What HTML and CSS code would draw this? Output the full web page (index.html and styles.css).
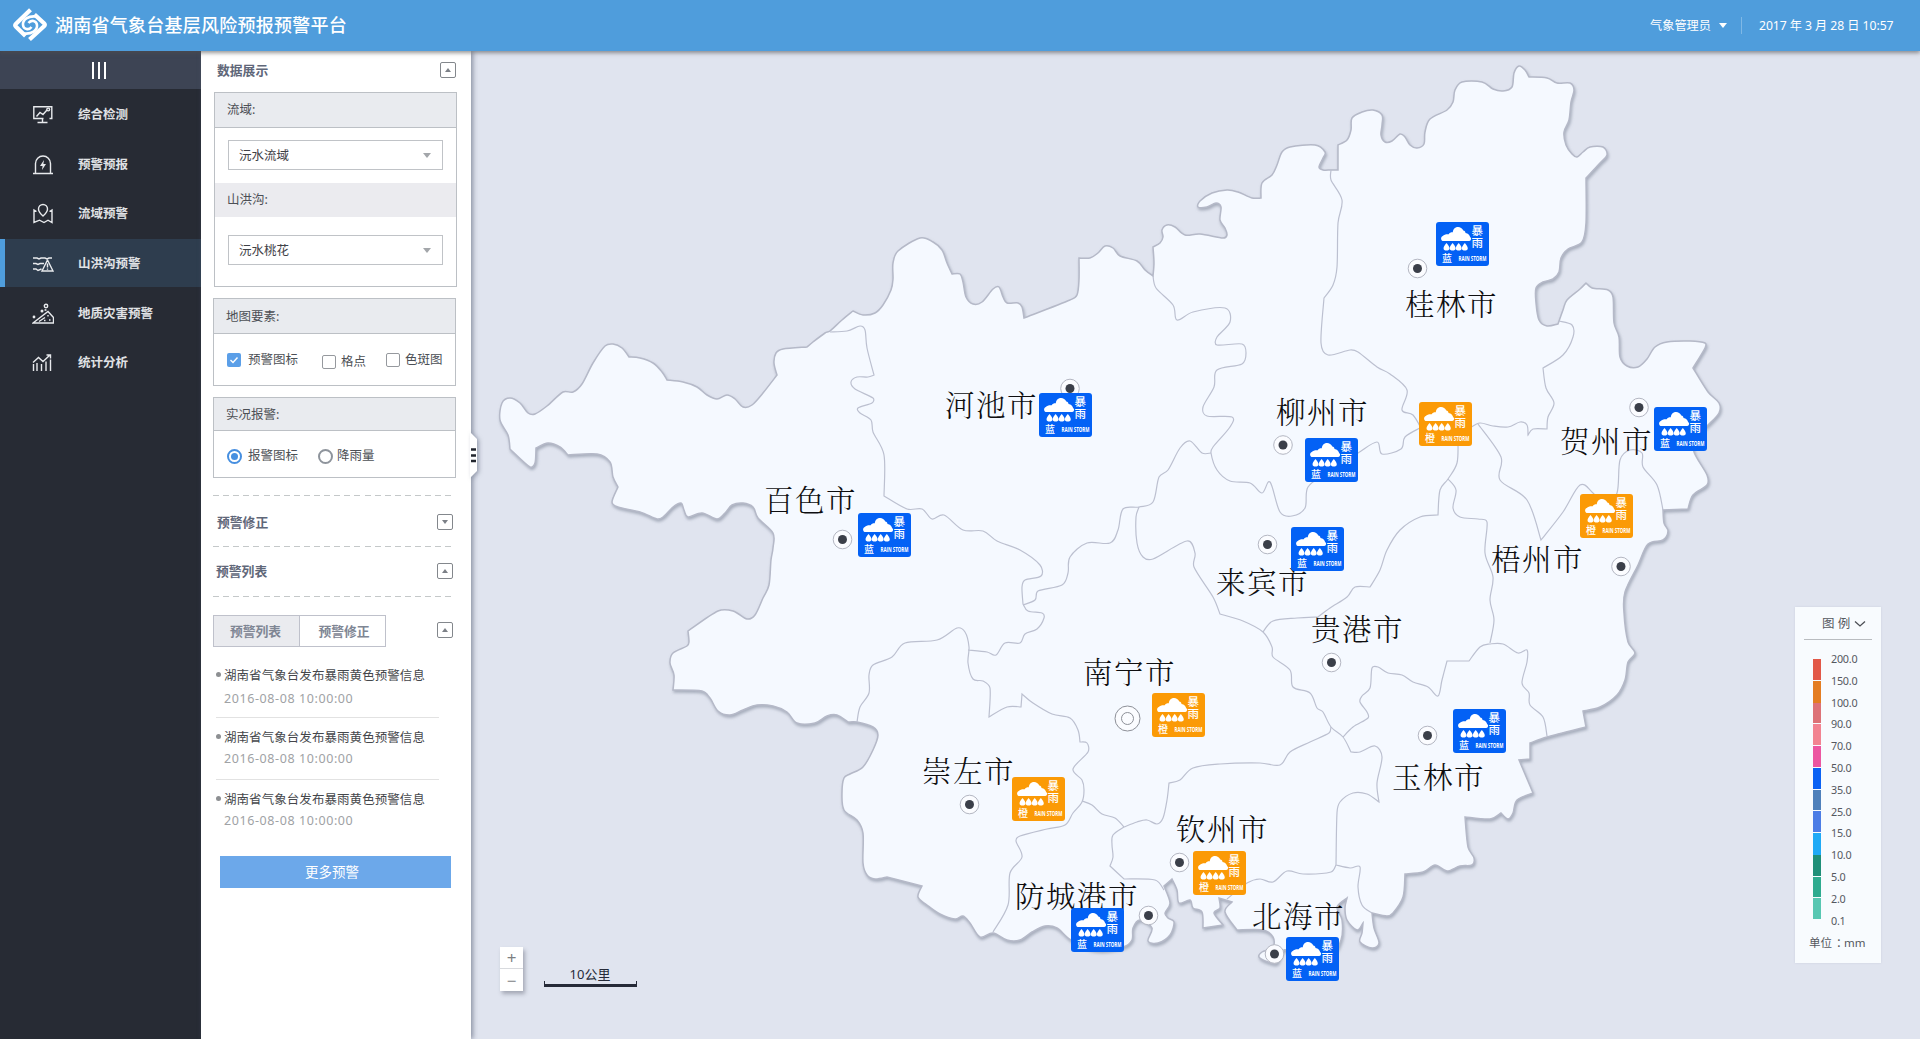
FILE: index.html
```html
<!DOCTYPE html>
<html lang="zh-CN">
<head>
<meta charset="utf-8">
<title>湖南省气象台基层风险预报预警平台</title>
<link rel="stylesheet" href="styles.css">
</head>
<body>
<header class="topbar">
  <svg class="logo" viewBox="0 0 36 34">
    <path class="arm" d="M18.500 1.800 4 15.700q-1.500 1.500 0 3L13.500 28M17.500 31.500 32 18.300q1.500-1.500 0-3L22.500 6.500"/>
    <path class="swirl" d="M24.500 8.500C16 7.500 10.500 11.500 11 17c.5 4.500 6 5.500 8.500 2M11.500 25.500C20 26.500 25.500 22.500 25 17c-.5-4.500-6-5.500-8.500-2"/>
  </svg>
  <h1 class="brand">湖南省气象台基层风险预报预警平台</h1>
  <div class="account">
    <span class="user">气象管理员</span><i class="caret"></i>
    <span class="clock">2017 年 3 月 28 日 10:57</span>
  </div>
</header>

<div class="layout">
  <nav class="sidebar">
    <div class="toggle"><i></i><i></i><i></i></div>
    <a class="item"><svg class="nav-icon" viewBox="0 0 22 22"><path d="M11.500 14.500H1.800V2.800h18v11.700h-2.300M10.500 14.500v4M5.500 18.500h10M4.500 12.500 8 8.500l3 2 4-4.500"/><circle cx="16.200" cy="5.500" r="1.400"/></svg><span>综合检测</span></a>
    <a class="item"><svg class="nav-icon" viewBox="0 0 22 22"><path d="M1 19.500h20M3.500 19.500V9.500a7.500 7.500 0 0 1 15 0v10"/><path class="solid" d="m12 6-4 6h2.600l-.6 4 4-6h-2.600Z"/></svg><span>预警预报</span></a>
    <a class="item"><svg class="nav-icon" viewBox="0 0 22 22"><path d="M4.500 8.500 2 7v12.500l5.500-2.300 4.500 2.300 4-2.300 4 2.300V7l-2.500 1.500M11 13Q6.500 9 6.500 6a4.500 4.500 0 0 1 9 0Q15.500 9 11 13Z"/></svg><span>流域预警</span></a>
    <a class="item active"><svg class="nav-icon" viewBox="0 0 22 22"><path d="M1 5h4l2 1 2-1h4l2 1 2-1h3M1 10.500h3l2 1 2-1h4M1 16h3l2 1.500L9.500 16M15.500 7l5.500 11H10ZM15.500 10.500v4M15.500 15.500v1.300"/></svg><span>山洪沟预警</span></a>
    <a class="item"><svg class="nav-icon" viewBox="0 0 22 22"><path d="M1 20 16 8.500l5.500 6V20ZM7 18.500l6-4M16 12v1.500M12 17.500h1.500M17 17h1.500"/><circle cx="14" cy="3" r="1.700"/><circle cx="10" cy="8" r=".8"/><circle cx="13.500" cy="7" r=".4"/><circle cx="2" cy="14" r=".7"/></svg><span>地质灾害预警</span></a>
    <a class="item"><svg class="nav-icon" viewBox="0 0 22 22"><path d="M1.500 19v-7M5 19v-8M9.500 19v-7M14 19V9.500M18.500 19V7.500M1 10.500l5.500-5 4.500 4 7-6.500M14.500 3H18.500v3.500"/></svg><span>统计分析</span></a>
  </nav>

  <aside class="panel">
    <div class="section first"><h2>数据展示</h2><button class="fold up"></button></div>
    <div class="card basin">
      <div class="card-head">流域:</div>
      <div class="select one">沅水流域</div>
      <div class="card-sub">山洪沟:</div>
      <div class="select two">沅水桃花</div>
    </div>
    <div class="card elements">
      <div class="card-head">地图要素:</div>
      <div class="options">
        <label class="opt"><i class="box on"><svg viewBox="0 0 14 14"><path d="m3.500 7 2.500 2.500 4.500-5"/></svg></i>预警图标</label>
        <label class="opt grid-opt"><i class="box"></i>格点</label>
        <label class="opt spot-opt"><i class="box"></i>色斑图</label>
      </div>
    </div>
    <div class="card alarms">
      <div class="card-head">实况报警:</div>
      <div class="options">
        <label class="opt"><i class="radio on"></i>报警图标</label>
        <label class="opt rain-opt"><i class="radio"></i>降雨量</label>
      </div>
    </div>
    <div class="section dashed"><h2>预警修正</h2><button class="fold down"></button></div>
    <div class="section dashed list-title"><h2>预警列表</h2><button class="fold up"></button></div>
    <div class="tabs-row">
      <div class="tabs"><span class="tab current">预警列表</span><span class="tab">预警修正</span></div>
      <button class="fold up"></button>
    </div>
    <ul class="news">
      <li><p>湖南省气象台发布暴雨黄色预警信息</p><time>2016-08-08 10:00:00</time></li>
      <li><p>湖南省气象台发布暴雨黄色预警信息</p><time>2016-08-08 10:00:00</time></li>
      <li><p>湖南省气象台发布暴雨黄色预警信息</p><time>2016-08-08 10:00:00</time></li>
    </ul>
    <button class="more">更多预警</button>
    <svg class="handle" viewBox="0 0 16 52"><path class="tab-shape" d="M0 2 7 9V41L0 48Z"/><path class="grip" d="M1 19.500h5M1 25.500h5M1 31h5"/></svg>
  </aside>

  <main class="map">
    <svg id="map" class="map-canvas" viewBox="471 51 1449 988">
      <defs>
        <filter id="relief" x="-5%" y="-5%" width="110%" height="110%"><feDropShadow dx="1" dy="2" stdDeviation="1.500" flood-color="#7f8798" flood-opacity=".6"/></filter>
        <symbol id="cloud" viewBox="0 0 30 26" overflow="visible">
          <path d="M3 15.300C.2 15.300-.3 11 2.300 10.200 3.500 8.600 6 8.300 8.200 8.500 9 6.800 11 6.300 12.300 6.500 12.800.3 20.500-.6 22.800 4.800c1.200 0 2.200 1 2.200 2.400 2.800.4 4.200 2.200 4.600 4 1.600 1 1.100 3.700-.8 4.100H3Z"/>
          <path id="drop" d="M6 17.300c4.400 5 3.500 7.500 0 7.500s-4.400-2.500 0-7.500Z"/>
          <use href="#drop" x="6.100"/><use href="#drop" x="12.200"/><use href="#drop" x="18.300"/>
        </symbol>
      </defs>
    </svg>
    <div class="zoom"><button>+</button><button>−</button></div>
    <div class="scale"><span>10公里</span><i></i></div>
    <section class="legend">
      <h3>图 例<svg viewBox="0 0 12 8"><path d="m1 1.500 5 4.500 5-4.500"/></svg></h3>
      <div class="ramp">
        <div class="colors">
          <i class="c200"></i><i class="c150 joined"></i><i class="c100"></i><i class="c90"></i><i class="c70"></i><i class="c50"></i>
          <i class="c35"></i><i class="c25"></i><i class="c15 joined"></i><i class="c10"></i><i class="c5"></i><i class="c2"></i>
        </div>
        <div class="values">
          <span>200.0</span><span>150.0</span><span>100.0</span><span>90.0</span><span>70.0</span><span>50.0</span><span>35.0</span>
          <span>25.0</span><span>15.0</span><span>10.0</span><span>5.0</span><span>2.0</span><span>0.1</span>
        </div>
      </div>
      <p>单位<span class="colon">：</span>mm</p>
    </section>
  </main>
</div>
<script src="map.js"></script>
</body>
</html>
```
FILE: styles.css
```css
* { box-sizing: border-box; }
body {
  margin: 0; height: 1039px; overflow: hidden; background: #e0e4ef;
  font: 12.5px/20px "Noto Sans", "Noto Sans CJK SC", sans-serif; color: #4c4f55;
}
h1, h2, h3, p, ul { margin: 0; padding: 0; font-weight: 400; }
button { padding: 0; border: 0; font: inherit; }

.topbar {
  position: relative; z-index: 3; display: flex; align-items: center; height: 51px; padding: 0 26px 0 12px;
  background: #4f9ddc; color: #fff; box-shadow: 0 2px 4px rgba(80, 80, 80, .6);
}
.logo { width: 36px; height: 34px; fill: none; stroke: #fff; margin-top: -1px; }
.logo .arm { stroke-width: 4.200; stroke-linejoin: round; }
.logo .swirl { stroke-width: 2.600; }
.brand { margin: -4px 0 0 7px; font: 500 18px/26px "Noto Sans CJK SC", sans-serif; letter-spacing: .25px; }
.account { display: flex; align-items: center; margin-left: auto; font-size: 12.200px; }
.caret { margin-left: 8px; border: 4.500px solid transparent; border-top: 5px solid #fff; border-bottom: 0; }
.clock { margin-left: 14px; padding-left: 17px; border-left: 1px solid #7fb8e6; line-height: 17px; width: 153px; white-space: nowrap; letter-spacing: -.05px; }

.layout { display: flex; height: 988px; }

.sidebar { flex: none; width: 201px; background: #272b34; }
.toggle { display: flex; justify-content: center; align-items: center; gap: 4px; height: 38px; padding-right: 3px; margin-bottom: 1px; background: #3d4454; }
.toggle i { width: 2px; height: 17px; background: #fff; }
.item { display: flex; align-items: center; height: 48px; margin-bottom: 1.700px; padding: 2px 0 0 32px; color: #e0e2e5; font-weight: 700; }
.item span { margin-left: 24px; }
.item.active { background: #2e3d4e; border-left: 5px solid #4f9ddc; padding-left: 27px; }
.nav-icon { width: 22px; height: 22px; fill: none; stroke: #e8eaed; stroke-width: 1.400; }
.nav-icon .solid { fill: #e8eaed; stroke: none; }

.panel { position: relative; z-index: 2; flex: none; width: 270px; padding: 0 15px 0 12px; background: #fff; box-shadow: 2px 0 5px rgba(90, 98, 120, .65); }
.section { display: flex; align-items: center; justify-content: space-between; height: 50px; padding: 0 3px 0 4px; }
.section h2 { font-size: 12.800px; font-weight: 700; color: #5f6779; }
.section.first { height: 41px; padding: 0 0 3px 4px; }
.section.dashed { height: 50.500px; padding-top: 3px; background: repeating-linear-gradient(90deg, #c4c8c9 0 6px, transparent 6px 10.100px) 0 0 / 241px 1px no-repeat; }
.section.list-title { padding: 1px 3px 0; }
.fold { display: grid; place-items: center; flex: none; width: 16px; height: 16px; border: 1px solid #83878c; border-radius: 2px; background: #fff; }
.fold::after { content: ""; border: 3px solid transparent; }
.fold.up::after { border-bottom: 4px solid #7c8087; border-top: 0; }
.fold.down::after { border-top: 4px solid #7c8087; border-bottom: 0; }

.card { width: 243px; border: 1px solid #bcc0c5; }
.card-head { display: flex; align-items: center; height: 35px; padding-left: 12px; background: #e9ebef; border-bottom: 1px solid #bcc0c5; }
.basin { height: 195px; margin-left: 1px; }
.elements { height: 88px; margin-top: 11px; }
.elements .card-head { padding-top: 1px; }
.alarms { height: 81px; margin: 11px 0 17px; }
.alarms .card-head { height: 33px; padding-top: 2px; }
.card-sub { display: flex; align-items: center; height: 34px; padding-left: 12px; background: #ebebef; }
.select { display: flex; align-items: center; justify-content: space-between; width: 215px; height: 30px; padding: 1px 11px 0 10px; border: 1px solid #c0c3c7; color: #3f4248; }
.select::after { content: ""; border: 4px solid transparent; border-top: 5px solid #a3a6aa; border-bottom: 0; }
.select.one { margin: 12px 0 13px 13px; }
.select.two { margin: 18px 0 0 13px; }
.options { display: flex; align-items: flex-start; padding: 16px 0 0 13px; }
.alarms .options { padding-top: 15px; }
.opt { display: flex; align-items: center; white-space: nowrap; }
.box { width: 14px; height: 14px; margin-right: 7px; border: 1px solid #96999e; border-radius: 2px; }
.box.on { border: 0; background: #5b9fe8; }
.box svg { display: block; fill: none; stroke: #fff; stroke-width: 1.400; }
.grid-opt { margin: 2px 0 0 24px; }
.spot-opt { margin-left: 20px; }
.grid-opt .box, .spot-opt .box { margin-right: 5px; }
.radio { display: grid; place-items: center; width: 15px; height: 15px; margin-right: 6px; border: 2px solid #8e949c; border-radius: 50%; }
.radio.on { border-color: #468fe0; }
.radio.on::after { content: ""; width: 7px; height: 7px; border-radius: 50%; background: #468fe0; }
.rain-opt { margin-left: 20px; }
.rain-opt .radio { margin-right: 4px; }

.tabs-row { display: flex; align-items: center; justify-content: space-between; height: 52px; padding: 17px 3px 0 0; background: repeating-linear-gradient(90deg, #c4c8c9 0 6px, transparent 6px 10.100px) 0 0 / 241px 1px no-repeat; }
.tabs-row .fold { margin-bottom: 1px; }
.tabs { display: flex; height: 32px; }
.tabs { border: 1px solid #bfc1cb; }
.tab { display: grid; place-items: center; width: 85px; font-size: 12.800px; font-weight: 700; color: #7f8694; }
.tab:last-child { padding-left: 3px; }
.tab.current { width: 86px; padding-right: 2px; background: #eaebef; border-right: 1px solid #bfc1cb; }

.news { list-style: none; width: 223px; margin: 18px 0 0 3px; }
.news li { position: relative; height: 62px; padding-left: 8px; border-bottom: 1px solid #e2e2e2; }
.news li:nth-child(1), .news li:nth-child(2) { height: 52px; margin-bottom: 10px; }
.news li:last-child { border: 0; }
.news li::before { content: ""; position: absolute; left: 0; top: 6px; width: 5px; height: 5px; border-radius: 50%; background: #8d8f92; }
.news p { white-space: nowrap; color: #45474b; letter-spacing: .060px; }
.news time { display: block; margin-top: 1px; color: #a0a2a5; letter-spacing: .590px; }
.news li:first-child time { margin-top: 3px; }
.more { display: block; width: 231px; height: 32px; margin: 4px 0 0 7px; padding: 0 7px 1px 0; background: #6ca8ea; color: #fff; font-size: 13.500px; }
.handle { position: absolute; left: 269px; top: 379px; width: 16px; height: 52px; overflow: visible; }
.tab-shape { fill: #fff; filter: drop-shadow(2px 1px 2px rgba(90, 98, 120, .5)); }
.grip { stroke: #22262e; stroke-width: 2.400; }

.map { position: relative; flex: 1; }
.map-canvas { display: block; width: 1449px; height: 988px; }
.land { fill: #f5f9ff; stroke: #b5b9c8; stroke-width: 1.500; filter: url(#relief); }
.border { fill: none; stroke: #bcc0d0; stroke-width: 1.200; }
.city-ring { fill: #fbfcff; stroke: #b4b7c2; }
.city-dot { fill: #3b3f49; }
.capital { fill: #fbfcff; stroke: #8d9098; }
.city-name { font: 300 29.500px "Noto Serif CJK SC", "Noto Sans CJK SC", serif; letter-spacing: 1.500px; fill: #0e0e10; }
.badge-blue { fill: #0361f5; }
.badge-orange { fill: #fb9a06; }
.badge-white { fill: #fff; }
.badge-kind { font: 500 11.500px "Noto Sans CJK SC", sans-serif; fill: #fff; }
.badge-level { font: 500 10px "Noto Sans CJK SC", sans-serif; fill: #fff; }
.badge-en { font: 700 6.500px "Open Sans", sans-serif; fill: #fff; }

.zoom { position: absolute; left: 29px; top: 896px; display: grid; gap: 1px; width: 23px; background: #d8dade; box-shadow: 2px 3px 4px rgba(90, 95, 110, .45); }
.zoom button { height: 21px; background: #fff; color: #7d7f83; font-size: 17px; line-height: 19px; }
.zoom button:last-child { height: 22px; line-height: 21px; }
.scale { position: absolute; left: 73px; top: 913px; width: 93px; padding-right: 1px; text-align: center; color: #262a38; font-size: 13px; }
.scale i { display: block; width: 93px; height: 6px; margin-top: -3px; border: 1px solid #262a38; border-top: 0; border-bottom-width: 3px; }

.legend { position: absolute; left: 1324px; top: 556px; width: 86px; height: 356px; padding: 7px 9px 0; background: #f8fbfe; box-shadow: 0 0 2px #c9cfdd; color: #55585f; }
.legend h3 { display: flex; align-items: center; height: 26px; padding: 0 6px 5px 18px; border-bottom: 1px solid #b9bcc0; font-size: 12.500px; white-space: nowrap; justify-content: space-between; }
.legend h3 svg { width: 12px; height: 8px; fill: none; stroke: #4c4f55; stroke-width: 1.300; }
.ramp { display: flex; gap: 10px; margin: 19px 0 0 9px; }
.colors { width: 8px; height: 261px; display: grid; grid-template-rows: repeat(12, 1fr); }
.colors i { border-bottom: 1px solid #f8fbfe; }
.colors .joined { border: 0; }
.values { display: grid; grid-template-rows: repeat(13, 21.800px); margin-top: -11px; height: 284px; font-size: 10.800px; line-height: 21.800px; letter-spacing: -.25px; }
.legend p { margin: 1px 0 0 5px; display: flex; font-size: 11.500px; white-space: nowrap; }
.legend .colon { width: 12px; padding-left: 4px; }
.c200 { background: #e25848; } .c150 { background: #e47d22; } .c100 { background: #dd7277; } .c90 { background: #f28391; }
.c70 { background: #ec56a1; } .c50 { background: #0b62f4; } .c35 { background: #4f80bb; } .c25 { background: #4c7de6; }
.c15 { background: #20aaf6; } .c10 { background: #1f8f78; } .c5 { background: #2eab8f; } .c2 { background: #58c7b2; }
```
FILE: map.js
```js
// Points are "x,y" pairs; a trailing "!" marks a sharp corner in the smoothed line.
const LAND = `500,420 502,403 510,398 520,403 528,413 535,414 547,406 563,392 573,392 582,384 593,363 605,346 613,344
622,348 629,357! 640,358 653,363 662,372 667,380! 683,382 697,387 707,395 717,399 727,395 735,399 743,407 752,405 763,393
777,375! 774,363 776,353 783,349 807,347! 813,342 825,333 830,331 842,320 853,311! 863,315 875,313 883,305 891,290 893,279
893,263 898,251 920,238 933,242 942,250 947,263 952,274! 960,274 963,282 966,297 973,304 982,302 993,289 999,287 1003,297
1007,303 1018,303 1022,307 1024,318! 1070,300 1077,295 1079,280 1079,258! 1090,258 1098,253 1105,246 1113,248 1120,256
1137,261 1145,270 1153,276! 1154,263 1153,247! 1160,243 1163,237 1162,230 1167,225 1175,227 1185,235 1200,234 1223,238
1227,235 1225,228 1220,220 1221,207 1216,203 1207,207 1198,207 1200,201 1212,193 1227,190 1238,192 1252,198 1261,198!
1262,183 1272,175 1277,165 1282,152 1290,147 1315,145 1325,152 1323,158 1319,167 1323,170 1331,170 1338,170! 1338,145!
1347,140 1351,130 1352,118 1362,112 1373,110 1382,115 1382,125 1381,135 1385,142 1392,141 1400,134 1405,137 1410,145
1417,148 1424,144 1425,132 1430,119 1447,110 1453,102 1455,90 1462,82 1482,82 1493,89 1503,91 1512,87 1514,73 1519,66
1525,70 1529,77! 1547,78 1557,83 1570,83 1574,90 1571,102 1569,120 1564,132 1566,145 1572,154 1577,157 1583,152 1590,147
1603,147 1607,155 1600,163 1586,178! 1586,223 1582,242 1568,249 1561,258 1559,272 1553,279 1543,282 1536,288 1536,303
1539,320 1547,326 1558,324! 1563,310 1567,300 1580,289 1586,283! 1592,288 1608,290 1613,297 1614,323 1619,337 1620,357
1627,366 1638,367 1647,359 1655,347 1667,342 1690,341 1705,343 1705,348 1693,368! 1708,392 1719,403 1719,413 1708,425
1695,437 1694,452 1707,475 1707,485 1693,495 1688,509! 1663,510! 1664,523 1668,531 1663,540 1648,544 1638,565 1625,592
1624,613 1628,642 1635,653 1628,662 1625,680 1617,695 1600,707 1583,711! 1586,727! 1547,737 1530,743! 1530,759! 1519,760!
1533,793! 1517,800 1513,813 1508,819 1501,813! 1490,819 1465,817! 1468,847 1474,858 1472,865 1460,866 1447,871 1435,865
1423,872 1405,874! 1403,897 1393,913 1387,916 1372,913! 1374,928 1379,943 1372,948 1360,942 1362,933 1363,923! 1357,930
1347,920 1345,908 1347,898! 1337,907 1342,920 1341,940 1330,955 1300,955 1284,950 1277,963 1268,962 1259,957 1262,952
1273,947 1273,937 1263,930 1237,930! 1225,912 1232,902! 1219,898! 1220,908 1214,913 1223,925! 1203,928! 1202,912
1193,908 1190,900 1179,903 1177,890 1172,879! 1164,886! 1170,903 1165,913 1168,918 1174,922 1170,935 1158,943 1148,941
1152,928 1140,920 1133,928 1132,940 1123,947 1095,950 1071,940 1057,928 1045,926 1032,932 1020,940 1007,940 993,933
980,937 970,923 963,916 955,919 940,914 927,905 918,897 922,886! 887,877! 875,879 867,875 863,863 863,833 857,820
844,810 842,793 844,778 850,774 863,767 873,750 878,735 873,727 857,722 848,722! 837,715 827,716 815,723 797,723 787,712
773,706 757,705 743,710 730,715 718,711 710,698 702,691 673,690! 674,675 670,663 673,653 687,646 689,642 688,631!
718,611 733,611 747,619 755,615 763,598 769,585 771,560 773,548 773,533 758,518 753,507 743,503 732,505 725,513 717,519
702,513 688,517 684,510 681,503 673,507 663,517 657,519 640,512 618,507 612,502 618,487! 613,477 610,462 597,454
568,455! 560,447 548,443 536,448! 535,463 530,467 510,449! 508,435`;

const BORDERS = [
  `830,332 847,331 860,326 865,330 867,348 874,375! 868,377 857,377 851,382 855,389 873,398 872,403 858,408 860,413 871,420
   873,432 884,455 884,496! 907,509 922,509 932,519 944,515 963,530 983,531 997,541 1020,550 1040,565 1041,576 1025,580
   1022,587 1023,604! 1028,611 1042,613 1044,618 1037,629 1025,634 1020,643 1005,643 996,655 987,652 968,650`,
  `857,722 860,707 869,693 869,675 873,665 892,657 905,643 937,640 957,628 965,632 969,647 968,663 973,679 983,681 990,688
   989,717! 1007,707 1021,707! 1022,694! 1033,703 1052,714 1070,718 1078,730 1080,742! 1087,743 1088,752 1073,769 1082,780
   1084,790 1082,802 1073,813 1065,825 1047,829 1020,836 1016,841 1022,857 1010,873 1008,905 993,932`,
  `1082,801 1092,805 1102,814 1115,818 1124,827`,
  `1124,827 1113,835 1112,845 1113,857 1110,866! 1124,879! 1155,880 1164,890`,
  `1124,827 1137,822 1147,820 1157,824 1163,818 1167,800 1169,783! 1180,780 1193,768 1220,764 1260,763 1280,765 1290,752
   1310,742 1329,733 1331,727`,
  `1139,507 1136,517 1137,543 1143,557 1153,559 1187,541 1195,553 1194,567 1213,597 1220,614! 1243,621 1263,632 1272,647
   1273,657 1290,670 1293,687 1310,693 1317,708 1323,712 1331,727 1343,737 1351,752! 1360,752 1375,746 1382,757 1377,783
   1379,802! 1367,794 1353,793 1340,802 1337,813 1336,865! 1350,868 1360,867 1358,887 1362,905 1372,913`,
  `1336,865 1331,872 1303,874 1287,871 1273,882 1260,879 1247,883 1227,899`,
  `1343,737 1353,727 1368,718 1367,712 1360,702 1362,696 1370,688 1372,668 1378,667 1388,673 1402,675 1413,682 1428,687
   1438,696 1442,680 1447,661! 1469,661! 1480,647 1490,644 1503,644 1518,653 1527,650 1527,662 1522,683 1529,693 1530,705
   1543,717 1547,736`,
  `1490,643 1494,620 1490,600 1493,577 1485,553 1487,522 1478,519 1460,517 1453,508 1456,490 1448,479`,
  `1458,440 1457,463 1448,479 1440,490 1438,515! 1420,517 1400,530 1387,550 1380,570 1370,587! 1355,587 1347,597 1330,608
   1318,617! 1297,618 1273,621 1263,632`,
  `1153,276 1156,288 1173,305 1177,320 1193,312 1225,308 1230,322 1217,337 1217,345 1242,344 1246,353 1242,364 1217,370
   1214,387 1203,407 1207,416 1232,417 1230,427 1213,447 1211,453 1217,470 1230,481 1250,483 1262,493 1270,482 1280,512
   1292,516 1305,508 1308,487 1327,473 1358,453 1377,442 1382,454 1401,449 1405,437 1420,428`,
  `1211,453 1202,453 1190,441 1180,448 1168,470 1159,477 1153,502 1139,507 1123,509 1118,530 1110,543 1087,543 1070,557
   1068,573 1062,585 1038,591 1035,600 1023,605`,
  `1331,170 1331,180 1342,200 1338,223 1337,267 1333,285 1324,298! 1321,343 1328,355 1350,350 1358,352 1377,367 1390,374
   1407,390 1402,410 1413,415 1422,430`,
  `1559,321 1572,325 1573,337 1563,355 1543,368! 1546,388 1554,403 1548,417 1547,429! 1533,429 1528,435! 1527,425 1520,422
   1508,427 1493,426 1480,423 1470,428`,
  `1478,424 1501,457 1500,480 1527,500 1541,540! 1563,512 1580,485 1593,493 1605,505 1617,493 1620,460 1630,450 1642,453
   1643,467 1657,485 1663,510`
];

// name, label x, label centre y, dot x, dot y
const CITIES = [
  ['百色市', 764, 500, 842.5, 539.5], ['河池市', 945, 405, 1070, 388.5], ['柳州市', 1276, 412, 1283, 445],
  ['来宾市', 1216, 582, 1267.5, 544.5], ['桂林市', 1405, 304, 1417.5, 268.5], ['贺州市', 1560, 441, 1639, 407.5],
  ['梧州市', 1491, 559, 1621, 566.5], ['贵港市', 1311, 629, 1331.5, 662.5], ['南宁市', 1083, 672, 1127.5, 718.5],
  ['崇左市', 922, 771, 969.5, 804.5], ['玉林市', 1392, 777, 1427.5, 735.5], ['钦州市', 1176, 829, 1179.5, 862.5],
  ['防城港市', 1015, 896, 1148.5, 915.5], ['北海市', 1252, 916, 1274.5, 954]
];

const WARNINGS = [
  [858, 513, 'blue'], [1039, 393, 'blue'], [1305, 438, 'blue'], [1291, 527, 'blue'], [1436, 222, 'blue'],
  [1419, 402, 'orange'], [1654, 407, 'blue'], [1580, 494, 'orange'], [1453, 709, 'blue'], [1152, 693, 'orange'],
  [1012, 777, 'orange'], [1193, 851, 'orange'], [1071, 908, 'blue'], [1286, 937, 'blue']
];

const svg = document.getElementById('map');

function add(parent, tag, attrs, text) {
  const el = document.createElementNS('http://www.w3.org/2000/svg', tag);
  for (const key in attrs) el.setAttribute(key, attrs[key]);
  if (text) el.textContent = text;
  parent.appendChild(el);
  return el;
}

// Catmull-Rom spline through the points, written as cubic Béziers.
function smooth(source, closed) {
  const pts = source.trim().split(/\s+/).map(s => {
    const [x, y] = s.replace('!', '').split(',').map(Number);
    return { x, y, sharp: s.endsWith('!') };
  });
  const n = pts.length;
  const at = i => closed ? pts[(i + n) % n] : pts[Math.max(0, Math.min(n - 1, i))];
  let d = `M${pts[0].x} ${pts[0].y}`;
  for (let i = 0; i < (closed ? n : n - 1); i++) {
    const b = at(i), c = at(i + 1);
    const a = b.sharp ? b : at(i - 1), e = c.sharp ? c : at(i + 2);
    const len = Math.hypot(c.x - b.x, c.y - b.y);
    const k1 = Math.min(1 / 6, .4 * len / (Math.hypot(c.x - a.x, c.y - a.y) || 1));
    const k2 = Math.min(1 / 6, .4 * len / (Math.hypot(e.x - b.x, e.y - b.y) || 1));
    d += `C${b.x + (c.x - a.x) * k1} ${b.y + (c.y - a.y) * k1} ${c.x - (e.x - b.x) * k2} ${c.y - (e.y - b.y) * k2} ${c.x} ${c.y}`;
  }
  return closed ? d + 'Z' : d;
}

add(svg, 'path', { class: 'land', d: smooth(LAND, true) });
BORDERS.forEach(line => add(svg, 'path', { class: 'border', d: smooth(line, false) }));

CITIES.forEach(([name, x, y, cx, cy]) => {
  if (name === '南宁市') {
    add(svg, 'circle', { class: 'capital', cx, cy, r: 12.5 });
    add(svg, 'circle', { class: 'capital', cx, cy, r: 6 });
  } else {
    add(svg, 'circle', { class: 'city-ring', cx, cy, r: 9.3 });
    add(svg, 'circle', { class: 'city-dot', cx, cy, r: 4.5 });
  }
  add(svg, 'text', { class: 'city-name', x, y: y + 11 }, name);
});

WARNINGS.forEach(([x, y, level]) => {
  const g = add(svg, 'g', { transform: `translate(${x} ${y})` });
  add(g, 'rect', { class: 'badge-' + level, width: 53, height: 44, rx: 3 });
  add(g, 'use', { class: 'badge-white', href: '#cloud', x: 4.5, y: 3.8, width: 30, height: 26 });
  add(g, 'text', { class: 'badge-kind', x: 35.5, y: 13 }, '暴');
  add(g, 'text', { class: 'badge-kind', x: 35.5, y: 25 }, '雨');
  add(g, 'text', { class: 'badge-level', x: 6, y: 40 }, level === 'blue' ? '蓝' : '橙');
  add(g, 'text', { class: 'badge-en', x: 22.500, y: 39, textLength: 28, lengthAdjust: 'spacingAndGlyphs' }, 'RAIN STORM');
});
```
